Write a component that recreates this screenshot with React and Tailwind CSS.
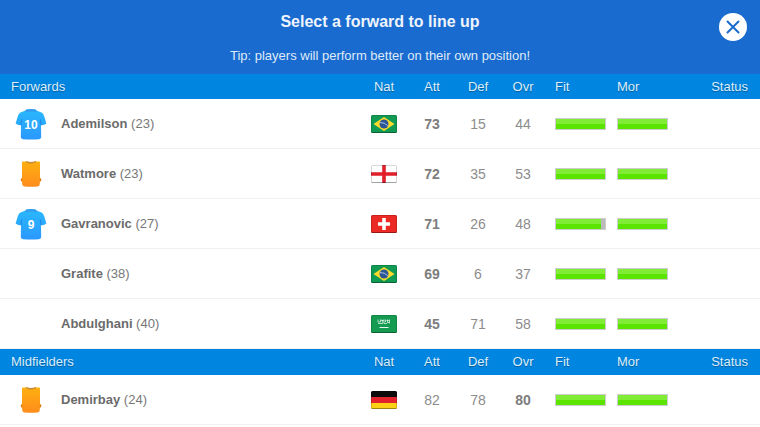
import React from "react";

const sections = [
    {
        title: "Forwards",
        players: [
            { name: "Ademilson", age: 23, shirt: 10, nat: "Brazil", att: 73, def: 15, ovr: 44, fit: 100, mor: 100 },
            { name: "Watmore", age: 23, bib: true, nat: "England", att: 72, def: 35, ovr: 53, fit: 100, mor: 100 },
            { name: "Gavranovic", age: 27, shirt: 9, nat: "Switzerland", att: 71, def: 26, ovr: 48, fit: 92, mor: 100 },
            { name: "Grafite", age: 38, nat: "Brazil", att: 69, def: 6, ovr: 37, fit: 100, mor: 100 },
            { name: "Abdulghani", age: 40, nat: "Saudi Arabia", att: 45, def: 71, ovr: 58, fit: 100, mor: 100 }
        ],
        main: "att"
    },
    {
        title: "Midfielders",
        players: [
            { name: "Demirbay", age: 24, bib: true, nat: "Germany", att: 82, def: 78, ovr: 80, fit: 100, mor: 100 }
        ],
        main: "ovr"
    }
];

function Shirt({ number }) {
    return (
        <svg className="mx-auto block" width="32" height="32" viewBox="0 0 32 32">
            <defs>
                <linearGradient id="shirt" x1="0" y1="0" x2="0" y2="1">
                    <stop offset="0" stopColor="#2ab9fb" />
                    <stop offset="1" stopColor="#2b98ff" />
                </linearGradient>
            </defs>
            <path
                d="M10.5 2.5 Q11 1 16 1 Q21 1 21.5 2.5 L26.5 4.5 Q28.3 5.4 29.2 8.2 L31.4 15.6 Q28.6 17.8 26 17.2 L26.2 29.6 Q26 30.8 24 31.2 Q16 32 8 31.2 Q6 30.8 5.8 29.6 L6 17.2 Q3.4 17.8 0.6 15.6 L2.8 8.2 Q3.7 5.4 5.5 4.5 Z"
                fill="url(#shirt)"
            />
            <path d="M10.5 2.5 Q11 1 16 1 Q21 1 21.5 2.5 L21 4.6 Q16 2.6 11 4.6 Z" fill="#359bf0" />
            <path d="M6 17 L6.6 11.5 M26 17 L25.4 11.5" stroke="#1c7fe0" strokeWidth="1.2" fill="none" opacity="0.7" />
            <text x="16" y="21" textAnchor="middle" fontSize="12" fontWeight="bold" fill="#fff">{number}</text>
        </svg>
    );
}

function Bib() {
    return (
        <svg className="mx-auto block" width="22" height="26" viewBox="0 0 22 26">
            <defs>
                <linearGradient id="bib" x1="0" y1="0" x2="0" y2="1">
                    <stop offset="0" stopColor="#fdb010" />
                    <stop offset="1" stopColor="#ff8c1c" />
                </linearGradient>
            </defs>
            <path
                d="M2 1.2 Q2 0.5 3 0.5 L6 0.5 Q11 4 16 0.5 L19 0.5 Q20 0.5 20 1.5 L20 17 L21.2 18 L21 20 L20 20.500 L19.6 24 Q19.3 25.3 17.5 25.500 Q11 26.200 4.500 25.500 Q2.7 25.3 2.4 24 L2 20.500 L1 20 L0.8 18 L2 17 Z"
                fill="url(#bib)"
            />
            <path d="M6 0.5 Q11 4 16 0.5 Q11 2.4 6 0.5 Z" stroke="#c07a1a" strokeWidth="0.6" fill="#a86a1c" />
            <path d="M0.8 18 L2.2 17.2 L2.2 20.500 L1 20 Z M21.200 18 L19.800 17.2 L19.800 20.500 L21 20 Z" fill="#d97a14" />
        </svg>
    );
}

const flagArt = {
    Brazil: (
        <>
            <rect width="26" height="18" fill="#119a54" />
            <path d="M2.5 9 L13 2 L23.5 9 L13 16 Z" fill="#fbdc2c" />
            <circle cx="13" cy="9" r="4.5" fill="#2c5596" />
            <path d="M9 7.600 Q13.500 7.200 16.800 10.700" stroke="#b9cfe4" strokeWidth="0.900" fill="none" />
        </>
    ),
    England: (
        <>
            <rect width="26" height="18" fill="#fff" />
            <path d="M13 0 V18 M0 9 H26" stroke="#e01f2b" strokeWidth="3.600" />
        </>
    ),
    Switzerland: (
        <>
            <rect width="26" height="18" fill="#ea2a23" />
            <path d="M13 3 V15 M7 9 H19" stroke="#fff" strokeWidth="3.600" />
        </>
    ),
    "Saudi Arabia": (
        <>
            <rect width="26" height="18" fill="#159a52" />
            <path
                d="M7 4.500 V7 H9.500 V4.500 M7 8.500 H12 M11 4.500 L12 8 M13 4.500 V8.500 H16 M14.500 4.500 V7 M16.500 4.500 V8 M15.500 5.500 H18 M18.500 4.500 V8.500 M10 5.500 H13 M17 7.500 H19"
                stroke="#c4e8d3"
                strokeWidth="0.900"
                fill="none"
            />
            <path d="M8.500 12.500 H17.500" stroke="#e6f6ed" strokeWidth="1" />
        </>
    ),
    Germany: (
        <>
            <rect width="26" height="6" fill="#0b0b0b" />
            <rect y="6" width="26" height="6" fill="#e3232b" />
            <rect y="12" width="26" height="6" fill="#fcd116" />
        </>
    )
};

function Flag({ country }) {
    return (
        <svg className="mx-auto block" width="26" height="18" viewBox="0 0 26 18" role="img" aria-label={country}>
            <defs>
                <clipPath id="flag">
                    <rect width="26" height="18" rx="1.500" />
                </clipPath>
            </defs>
            <g clipPath="url(#flag)">
                {flagArt[country]}
                <rect y="17" width="26" height="1" fill="#000" opacity="0.250" />
            </g>
            <rect x="0.500" y="0.500" width="25" height="17" rx="1" fill="none" stroke="#000" strokeOpacity="0.150" />
        </svg>
    );
}

function Bar({ value }) {
    return (
        <div className="h-3 w-[51px] border border-[#cdcdcd] bg-[#bababa]">
            <div className="h-full bg-linear-to-b from-[#80ec35] from-50% to-[#5be400] to-50%" style={{ width: `${value}%` }} />
        </div>
    );
}

function Stat({ value, bold }) {
    return <td className={bold ? "text-center text-sm font-bold text-[#7d7d7d]" : "text-center text-sm text-[#8c8c8c]"}>{value}</td>;
}

function App() {
    return (
        <div className="min-h-screen bg-white font-['Liberation_Sans',Arial,sans-serif] text-[13px]">
            <header className="grid h-[74px] grid-cols-[56px_1fr_56px] bg-[#1a6bcf] text-center">
                <div className="col-start-2 pt-3">
                    <h1 className="text-base leading-5 font-bold text-[#eef4fc]">Select a forward to line up</h1>
                    <p className="mt-[14px] leading-5 text-[#dfeaf8]">Tip: players will perform better on their own position!</p>
                </div>
                <button
                    type="button"
                    aria-label="Close"
                    className="mt-[13px] ml-[15px] flex size-7 items-center justify-center rounded-full bg-white text-[#1a6bcf]"
                >
                    <svg width="14" height="14" viewBox="0 0 14 14" fill="none" stroke="currentColor" strokeWidth="2" strokeLinecap="round">
                        <path d="M1.500 1.500 L12.500 12.500 M12.500 1.500 L1.500 12.500" />
                    </svg>
                </button>
            </header>

            <table className="w-full table-fixed border-separate border-spacing-0">
                <colgroup>
                    <col className="w-[61px]" />
                    <col />
                    <col className="w-12" />
                    <col className="w-12" />
                    <col className="w-11" />
                    <col className="w-[46px]" />
                    <col className="w-[63px]" />
                    <col className="w-[67px]" />
                    <col className="w-[84px]" />
                </colgroup>
                {sections.map((section) => (
                    <tbody key={section.title} className="group">
                        <tr className="h-[25px] bg-[#0085e1] text-[#dceefb] text-shadow-[0_1px_1px_rgb(0_0_0/0.3)] *:font-normal group-not-first-of-type:h-[26px]">
                            <th colSpan={2} className="pl-[11px] text-left">{section.title}</th>
                            <th>Nat</th>
                            <th>Att</th>
                            <th>Def</th>
                            <th>Ovr</th>
                            <th className="pl-[9px] text-left">Fit</th>
                            <th className="pl-2 text-left">Mor</th>
                            <th className="pr-3 text-right">Status</th>
                        </tr>
                        {section.players.map((player) => (
                            <tr key={player.name} className="h-[50px] *:border-b *:border-[#f1f1f1]">
                                <td>
                                    {player.shirt && <Shirt number={player.shirt} />}
                                    {player.bib && <Bib />}
                                </td>
                                <td className="text-[#777]">
                                    <b className="text-[#6b6b6b]">{player.name}</b> ({player.age})
                                </td>
                                <td><Flag country={player.nat} /></td>
                                <Stat value={player.att} bold={section.main === "att"} />
                                <Stat value={player.def} />
                                <Stat value={player.ovr} bold={section.main === "ovr"} />
                                <td className="pl-[9px]"><Bar value={player.fit} /></td>
                                <td className="pl-2"><Bar value={player.mor} /></td>
                                <td></td>
                            </tr>
                        ))}
                    </tbody>
                ))}
            </table>
        </div>
    );
}

export default App;
